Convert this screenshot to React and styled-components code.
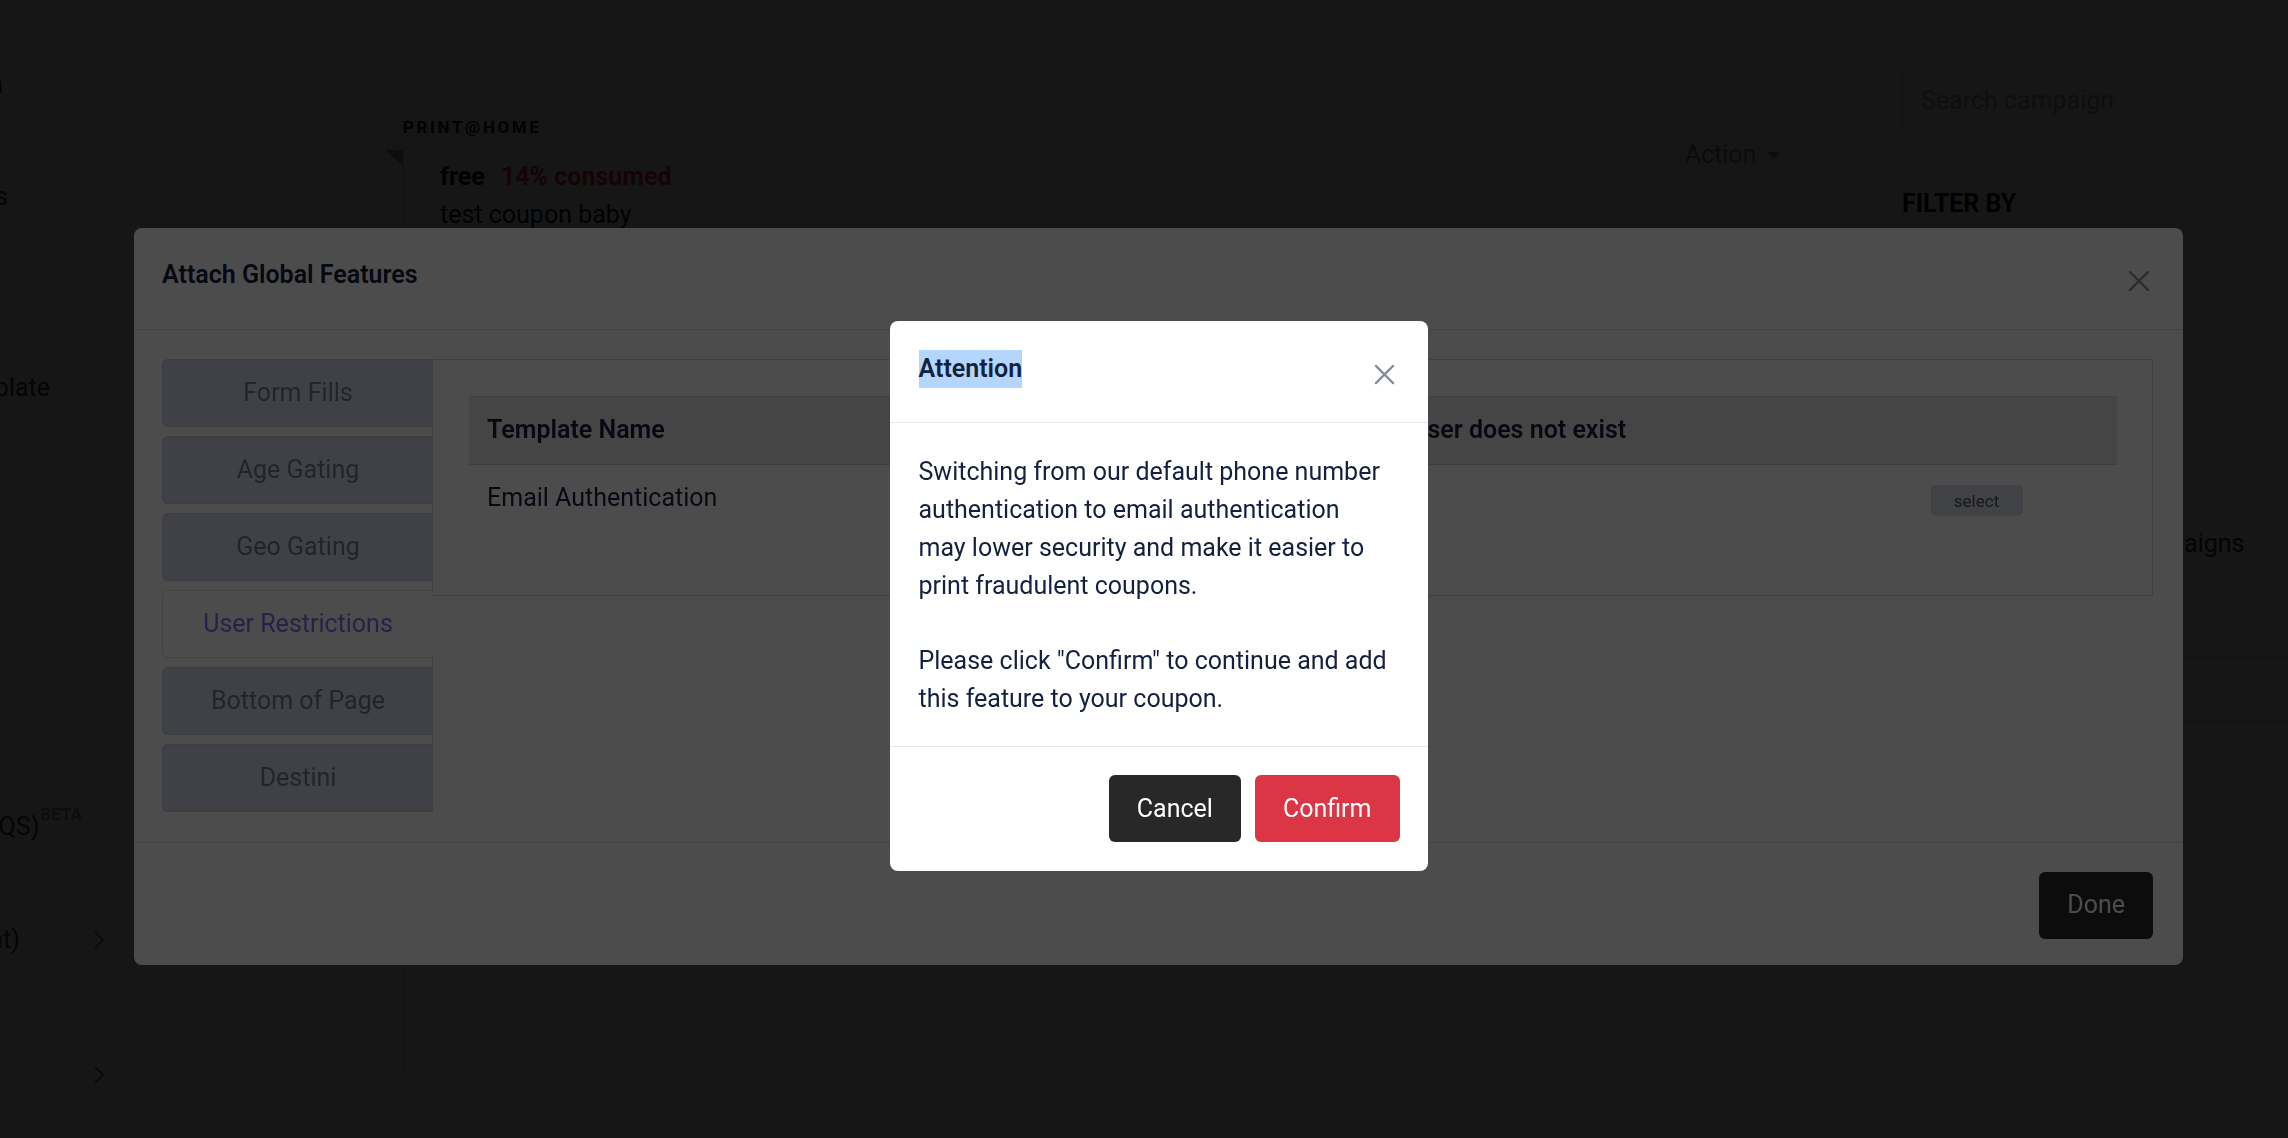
import React from "react";
import styled, { createGlobalStyle } from "styled-components";

const GlobalStyle = createGlobalStyle`
  * { box-sizing: border-box; }
  html, body { margin: 0; padding: 0; }
  body {
    font-family: Roboto, "Liberation Sans", sans-serif;
    font-size: 25px;
    line-height: 38px;
    color: #14213d;
    background: #fff;
    overflow: hidden;
  }
`;

const Page = styled.div`
  width: 2288px;
  height: 1138px;
  display: flex;
  flex-direction: column;
  overflow: hidden;
`;

const TopBar = styled.div`
  height: 13px;
  flex-shrink: 0;
  border-bottom: 1px solid #d9d9d9;
`;

const Layout = styled.div`
  flex: 1;
  display: flex;
  min-height: 0;
`;

const Sidebar = styled.nav`
  width: 150px;
  flex-shrink: 0;
  border-right: 1px solid #d6d6d6;
  overflow: hidden;
  display: flex;
  flex-direction: column;
`;

const SideItem = styled.div`
  display: flex;
  align-items: center;
  height: 38px;
  margin-top: ${(p) => p.$gap}px;
  color: #3a3a3a;
  white-space: nowrap;
`;

/* the menu is scrolled sideways: each label ends at $end px */
const SideLabel = styled.div`
  width: 0;
  margin-left: ${(p) => p.$end}px;
  flex-shrink: 0;
  display: flex;
  justify-content: flex-end;
  align-items: center;
`;

const Beta = styled.sup`
  font-size: 17px;
  font-weight: 700;
  color: #9a9a9a;
  line-height: 1;
  align-self: flex-start;
  margin: -2px 0 0 1px;
`;

const Chevron = styled.span`
  margin-left: auto;
  margin-right: 44px;
  display: flex;
  color: #555;
`;

const Main = styled.main`
  flex: 1;
  display: flex;
  align-items: flex-start;
  padding-left: 253px;
`;

const Card = styled.section`
  position: relative;
  width: 1443px;
  height: 1000px;
  margin-top: 71px;
  border: 1px solid #dcdcdc;
  border-radius: 8px;
  padding: 37px 36px 0 36px;
  display: flex;
  justify-content: space-between;
  align-items: flex-start;
`;

const Ribbon = styled.div`
  position: absolute;
  left: -19px;
  top: 18px;
  height: 47px;
  width: 176px;
  padding-left: 18px;
  display: flex;
  align-items: center;
  background: #f1f1f1;
  color: #1a1a1a;
  font-size: 17px;
  font-weight: 700;
  letter-spacing: 2.6px;

  &::after {
    content: "";
    position: absolute;
    left: 0;
    top: 100%;
    border-top: 16px solid #9a9a9a;
    border-left: 18px solid transparent;
  }
`;

const CouponText = styled.div`
  padding-top: 36px;
`;

const Strong = styled.span`
  font-weight: 700;
  color: ${(p) => p.$color || "#111"};
  margin-right: 16px;
`;

const ActionButton = styled.button`
  height: 66px;
  width: 153px;
  border: 1px solid #e3e6e3;
  border-radius: 6px;
  background: #eef1ee;
  color: #7a7f85;
  font: inherit;
  display: flex;
  align-items: center;
  justify-content: center;
  gap: 12px;

  &::after {
    content: "";
    border-top: 7px solid #7a7f85;
    border-left: 6px solid transparent;
    border-right: 6px solid transparent;
  }
`;

const RightColumn = styled.aside`
  width: 480px;
  flex-shrink: 0;
  margin-left: 56px;
  margin-top: 54px;
  display: flex;
  flex-direction: column;
`;

const Search = styled.input`
  height: 66px;
  width: 100%;
  border: 1px solid #cfcfcf;
  border-radius: 6px;
  padding: 0 18px;
  font: inherit;
  color: #333;
  &::placeholder { color: #a2a2a2; }
`;

const FilterTitle = styled.div`
  margin-top: 52px;
  font-weight: 700;
  color: #111;
`;

const CheckRow = styled.label`
  margin-top: 302px;
  display: flex;
  align-items: center;
  gap: 12px;
  color: #333;
`;

const Divider = styled.div`
  margin-top: 94px;
  height: 64px;
  border-top: 1px solid #cfcfcf;
  border-bottom: 1px solid #cfcfcf;
`;

const Backdrop = styled.div`
  position: fixed;
  inset: 0;
  background: rgba(0, 0, 0, 0.7);
`;

const ModalLayer = styled.div`
  position: fixed;
  inset: 0;
  display: flex;
  align-items: center;
  justify-content: center;
  padding: 54px 0 0 29px;
`;

const Dialog = styled.div`
  width: ${(p) => p.$width}px;
  background: #fff;
  border-radius: 8px;
  display: flex;
  flex-direction: column;
`;

const Header = styled.div`
  display: flex;
  justify-content: space-between;
  align-items: flex-start;
  padding: ${(p) => p.$pad};
  border-bottom: 1px solid ${(p) => p.$line};
`;

const Title = styled.span`
  font-weight: 600;
  color: #14213d;
  background: ${(p) => (p.$selected ? "#b4d6fc" : "transparent")};
`;

const CloseButton = styled.button`
  border: none;
  background: none;
  padding: 0;
  margin-top: ${(p) => p.$offset}px;
  display: flex;
  color: ${(p) => p.$color || "#868e9c"};
`;

const Body = styled.div`
  display: flex;
  padding: 29px 30px 30px 28px;
`;

const TabNav = styled.div`
  width: 271px;
  flex-shrink: 0;
  display: flex;
  flex-direction: column;
  gap: 9px;
  border-right: 1px solid #cfd1da;
`;

const Tab = styled.div`
  height: 68px;
  margin-right: -1px;
  display: flex;
  align-items: center;
  justify-content: center;
  border: 1px solid ${(p) => (p.$active ? "#e2e2e2" : "#c9ccda")};
  border-right: none;
  border-radius: 6px 0 0 6px;
  background: ${(p) => (p.$active ? "#fff" : "#d6d9eb")};
  color: ${(p) => (p.$active ? "#8070f5" : "#737a8f")};
`;

const Pane = styled.div`
  flex: 1;
  height: 237px;
  border: 1px solid #d6d6d6;
  border-left: none;
  padding: 36px 35px 0 36px;
`;

const Table = styled.table`
  width: 100%;
  border-collapse: collapse;
  table-layout: fixed;
`;

const Th = styled.th`
  height: 68px;
  padding: 0 18px;
  text-align: left;
  font-weight: 600;
  background: #e8e8e8;
  border-top: 1px solid #d2d2d2;
  border-bottom: 1px solid #d2d2d2;
  white-space: nowrap;
`;

const Td = styled.td`
  height: 68px;
  padding: 0 18px;
  text-align: ${(p) => p.$align || "left"};
  vertical-align: middle;
`;

const SmallButton = styled.button`
  width: 92px;
  height: 31px;
  margin-top: 6px;
  border: none;
  border-radius: 5px;
  background: #dbdde8;
  color: #50535c;
  font-family: inherit;
  font-size: 17px;
`;

const Footer = styled.div`
  display: flex;
  justify-content: flex-end;
  gap: 14px;
  padding: ${(p) => p.$pad};
  border-top: 1px solid ${(p) => p.$line};
`;

const Button = styled.button`
  height: 67px;
  padding: 0 28px;
  border: none;
  border-radius: 6px;
  font: inherit;
  color: #fff;
  background: ${(p) => (p.$danger ? "#dc3545" : "#282828")};
`;

const Message = styled.div`
  padding: 30px 37px 28px 29px;
  color: #13203f;
`;

const Para = styled.p`
  margin: 0;
  & + & { margin-top: 37px; }
`;

const XIcon = ({ size = 22 }) => (
  <svg width={size} height={size} viewBox="0 0 22 22" fill="none" stroke="currentColor" strokeWidth="2.4" strokeLinecap="round">
    <path d="M2 2 L20 20 M20 2 L2 20" />
  </svg>
);

const ChevronIcon = () => (
  <svg width="12" height="18" viewBox="0 0 12 18" fill="none" stroke="currentColor" strokeWidth="1.6">
    <path d="M2 1 L10 9 L2 17" />
  </svg>
);

const tabs = ["Form Fills", "Age Gating", "Geo Gating", "User Restrictions", "Bottom of Page", "Destini"];

const sideItems = [
  { label: "Campaign", gap: 53, end: 3 },
  { label: "Coupons", gap: 74, end: 8 },
  { label: "Coupon Template", gap: 153, end: 50 },
  { label: "Help (FAQS)", gap: 401, end: 82, beta: true },
  { label: "Settings (Account)", gap: 75, end: 20, chevron: true },
  { label: "Reports", gap: 97, end: -6, chevron: true },
];

export default function App() {
  return (
    <>
      <GlobalStyle />
      <Page>
        <TopBar />
        <Layout>
          <Sidebar>
            {sideItems.map((item) => (
              <SideItem key={item.label} $gap={item.gap}>
                <SideLabel $end={item.end}>
                  {item.label}
                  {item.beta && <Beta>BETA</Beta>}
                </SideLabel>
                {item.chevron && (
                  <Chevron>
                    <ChevronIcon />
                  </Chevron>
                )}
              </SideItem>
            ))}
          </Sidebar>
          <Main>
            <Card>
              <Ribbon>PRINT@HOME</Ribbon>
              <CouponText>
                <div>
                  <Strong>free</Strong>
                  <Strong $color="#e03444">14% consumed</Strong>
                </div>
                <div>test coupon baby</div>
              </CouponText>
              <ActionButton>Action</ActionButton>
            </Card>
            <RightColumn>
              <Search placeholder="Search campaign" />
              <FilterTitle>FILTER BY</FilterTitle>
              <CheckRow>
                <input type="checkbox" />
                Include archived campaigns
              </CheckRow>
              <Divider />
            </RightColumn>
          </Main>
        </Layout>

        <Backdrop />
        <ModalLayer>
          <Dialog $width={2049}>
            <Header $pad="28px 33px 35px 28px" $line="#e2e2e2">
              <Title>Attach Global Features</Title>
              <CloseButton $offset={14} $color="#8a8f99">
                <XIcon />
              </CloseButton>
            </Header>
            <Body>
              <TabNav>
                {tabs.map((t) => (
                  <Tab key={t} $active={t === "User Restrictions"}>
                    {t}
                  </Tab>
                ))}
              </TabNav>
              <Pane>
                <Table>
                  <colgroup>
                    <col style={{ width: 924 }} />
                    <col style={{ width: 443 }} />
                    <col />
                  </colgroup>
                  <thead>
                    <tr>
                      <Th>Template Name</Th>
                      <Th>User does not exist</Th>
                      <Th />
                    </tr>
                  </thead>
                  <tbody>
                    <tr>
                      <Td>Email Authentication</Td>
                      <Td />
                      <Td $align="center">
                        <SmallButton>select</SmallButton>
                      </Td>
                    </tr>
                  </tbody>
                </Table>
              </Pane>
            </Body>
            <Footer $pad="29px 30px 26px" $line="#e2e2e2">
              <Button>Done</Button>
            </Footer>
          </Dialog>
        </ModalLayer>

        <Backdrop />
        <ModalLayer>
          <Dialog $width={538}>
            <Header $pad="29px 33px 34px 29px" $line="#e3e5f0">
              <Title $selected>Attention</Title>
              <CloseButton $offset={14}>
                <XIcon size={21} />
              </CloseButton>
            </Header>
            <Message>
              <Para>
                Switching from our default phone number authentication to email authentication may lower security and
                make it easier to print fraudulent coupons.
              </Para>
              <Para>Please click "Confirm" to continue and add this feature to your coupon.</Para>
            </Message>
            <Footer $pad="28px 28px 29px" $line="#e3e5f0">
              <Button>Cancel</Button>
              <Button $danger>Confirm</Button>
            </Footer>
          </Dialog>
        </ModalLayer>
      </Page>
    </>
  );
}
